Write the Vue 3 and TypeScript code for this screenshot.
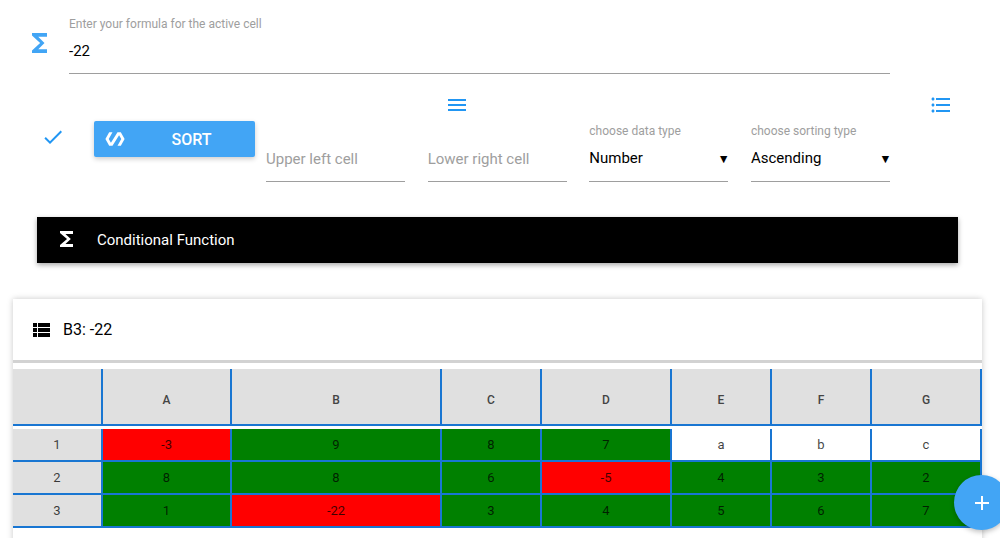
<script setup lang="ts">
interface Cell { v: string; c: string }
const cols: string[] = ['A', 'B', 'C', 'D', 'E', 'F', 'G']
const raw: string[][] = [
  ['-3', '9', '8', '7', 'a', 'b', 'c'],
  ['8', '8', '6', '-5', '4', '3', '2'],
  ['1', '-22', '3', '4', '5', '6', '7'],
]
const rows: Cell[][] = raw.map((r) =>
  r.map((v) => {
    const n = Number(v)
    return { v, c: Number.isNaN(n) ? 'plain' : n < 0 ? 'neg' : 'pos' }
  }),
)
const sigma = 'M18 4H6v2l6.5 6L6 18v2h12v-3h-7l5-5-5-5h7z'
</script>

<template>
  <div class="page">
    <div class="formula">
      <svg class="sigma" viewBox="6 4 12 16" preserveAspectRatio="none"><path :d="sigma" /></svg>
      <label class="field formula-field">
        <span class="small-label">Enter your formula for the active cell</span>
        <input class="input" value="-22" />
      </label>
    </div>

    <div class="icons">
      <svg class="ic" viewBox="0 0 24 24"><path d="M3 18h18v-2H3v2zm0-5h18v-2H3v2zm0-7v2h18V6H3z" /></svg>
      <svg class="ic" viewBox="0 0 24 24"><path d="M4 10.5c-.83 0-1.5.67-1.5 1.5s.67 1.5 1.5 1.5 1.5-.67 1.5-1.5-.67-1.5-1.5-1.5zm0-6c-.83 0-1.5.67-1.5 1.5S3.17 7.5 4 7.5 5.5 6.83 5.5 6 4.83 4.5 4 4.5zm0 12c-.83 0-1.5.68-1.5 1.5s.68 1.5 1.5 1.5 1.5-.68 1.5-1.5-.67-1.5-1.5-1.5zM7 19h14v-2H7v2zm0-6h14v-2H7v2zm0-8v2h14V5H7z" /></svg>
    </div>

    <div class="sortrow">
      <svg class="ic check" viewBox="0 0 24 24"><path d="M9 16.2L4.8 12l-1.4 1.4L9 19 21 7l-1.4-1.4z" /></svg>
      <button class="sort" type="button">
        <svg class="poly" viewBox="0 0 24 24"><path d="M19 4h-4L7.11 16.63 4.5 12 9 4H5L.5 12 5 20h4l7.89-12.63L19.5 12 15 20h4l4.5-8z" /></svg>
        <span class="sort-text">SORT</span>
      </button>
      <div class="fields">
        <div class="field"><input class="input ph" placeholder="Upper left cell" /></div>
        <div class="field"><input class="input ph" placeholder="Lower right cell" /></div>
        <div class="field">
          <span class="small-label">choose data type</span>
          <div class="select"><span>Number</span><span class="caret">▼</span></div>
        </div>
        <div class="field">
          <span class="small-label">choose sorting type</span>
          <div class="select"><span>Ascending</span><span class="caret">▼</span></div>
        </div>
      </div>
    </div>

    <div class="bar">
      <svg class="bar-sigma" viewBox="6 4 12 16" preserveAspectRatio="none"><path :d="sigma" /></svg>
      <span>Conditional Function</span>
    </div>

    <section class="card">
      <header class="card-head">
        <svg class="view" viewBox="0 0 24 24"><path d="M4 14h4v-4H4v4zm0 5h4v-4H4v4zM4 9h4V5H4v4zm5 5h12v-4H9v4zm0 5h12v-4H9v4zM9 5v4h12V5H9z" /></svg>
        <span>B3: -22</span>
      </header>
      <div class="sheet">
        <div class="hd corner"></div>
        <div v-for="c in cols" :key="c" class="hd">{{ c }}</div>
        <div class="gap"></div>
        <template v-for="(r, i) in rows" :key="i">
          <div class="rowhead">{{ i + 1 }}</div>
          <div v-for="(cell, j) in r" :key="j" class="cell" :class="cell.c">{{ cell.v }}</div>
        </template>
      </div>
    </section>

    <button class="fab" type="button" aria-label="add">
      <svg viewBox="0 0 24 24"><path d="M19 13h-6v6h-2v-6H5v-2h6V5h2v6h6v2z" /></svg>
    </button>
  </div>
</template>

<style>
html, body { margin: 0; overflow: hidden; background: #fff; }
</style>

<style scoped>
.page {
  position: relative;
  height: 538px;
  overflow: hidden;
  font-family: Roboto, "Liberation Sans", sans-serif;
  color: #000;
  box-sizing: border-box;
  padding-top: 16px;
}
.formula { display: flex; padding: 0 110px 0 32px; align-items: flex-start; }
.sigma { width: 15px; height: 20px; margin: 17px 22px 0 0; fill: #42a5f5; flex: none; }
.formula-field { flex: 1; }
.field { display: flex; flex-direction: column; justify-content: flex-end; }
.small-label { font-size: 12px; line-height: 16px; color: #9e9e9e; white-space: nowrap; }
.input {
  box-sizing: border-box;
  width: 100%;
  height: 42px;
  border: 0;
  border-bottom: 1px solid #9e9e9e;
  outline: 0;
  padding: 0 0 4px;
  background: transparent;
  font: 400 15px Roboto, sans-serif;
  color: #000;
}
.input.ph { height: 43px; padding-bottom: 2px; }
.input::placeholder { color: #9e9e9e; opacity: 1; }
.icons {
  display: flex;
  justify-content: space-between;
  padding: 19px 47px 0 445px;
}
.ic { width: 24px; height: 24px; fill: #2196f3; display: block; }
.sortrow { display: flex; align-items: flex-start; padding: 0 110px 0 41px; margin-top: -2px; height: 102px; }
.check { margin: 10px 29px 0 0; flex: none; }
.sort {
  flex: none;
  display: flex;
  align-items: center;
  width: 161px;
  height: 36px;
  margin-top: 6px;
  padding: 0 0 0 11px;
  border: 0;
  border-radius: 2px;
  background: #42a5f5;
  color: #fff;
  box-shadow: 0 2px 5px rgba(0, 0, 0, .2);
  font: 500 16px Roboto, sans-serif;
}
.poly { width: 20px; height: 20px; fill: #fff; flex: none; }
.sort-text { flex: 1; text-align: center; padding-left: 3px; }
.fields {
  flex: 1;
  display: grid;
  grid-template-columns: repeat(4, 139px);
  justify-content: space-between;
  margin-left: 11px;
  height: 67px;
  align-items: end;
}
.select {
  display: flex;
  align-items: center;
  justify-content: space-between;
  height: 43px;
  box-sizing: border-box;
  border-bottom: 1px solid #9e9e9e;
  padding-bottom: 4px;
  font-size: 15px;
  padding-right: 1px;
}
.caret { font-size: 9.5px; color: #000; font-family: "DejaVu Sans", sans-serif; }
.bar {
  display: flex;
  align-items: center;
  height: 46px;
  margin: 0 42px 0 37px;
  background: #000;
  color: #fff;
  font-size: 15px;
  font-weight: 400;
  box-shadow: 0 2px 5px rgba(0, 0, 0, .35);
}
.bar-sigma { width: 13px; height: 16px; margin: -2px 24px 0 23px; fill: #fff; flex: none; }
.card {
  margin: 36px 18px 0 13px;
  height: 300px;
  background: #fff;
  box-shadow: 0 0 6px rgba(0, 0, 0, .22);
}
.card-head {
  display: flex;
  align-items: center;
  height: 61px;
  padding-left: 16px;
  border-bottom: 3px solid #d2d2d2;
  font-size: 16px;
}
.view { width: 24px; height: 24px; fill: #000; margin-right: 10px; flex: none; }
.sheet {
  display: grid;
  grid-template-columns: 90px 129px 210px 100px 130px 100px 100px 110px;
  grid-template-rows: 57px 3px 33px 33px 33px;
  margin-top: 6px;
  font-size: 13px;
  color: rgba(0, 0, 0, .75);
}
.sheet > div {
  display: flex;
  align-items: center;
  justify-content: center;
  box-sizing: border-box;
}
.hd, .rowhead { background: #e0e0e0; }
.hd {
  border-right: 2px solid #1976d2;
  border-bottom: 2px solid #1976d2;
  padding-top: 6px;
  font-size: 12px;
  font-weight: 500;
  color: #444;
}
.gap { grid-column: 1 / -1; background: #fff; }
.rowhead, .cell {
  border-right: 2px solid #1976d2;
  border-bottom: 2px solid #1976d2;
}
.cell { background: #fff; }
.cell.neg { background: #f00; }
.cell.pos { background: #008000; }
.fab {
  position: absolute;
  left: 954px;
  top: 475px;
  width: 55px;
  height: 55px;
  padding: 0;
  border: 0;
  border-radius: 50%;
  background: #42a5f5;
  display: flex;
  align-items: center;
  justify-content: center;
  box-shadow: 0 2px 5px rgba(0, 0, 0, .25);
}
.fab svg { width: 24px; height: 24px; fill: #fff; }
</style>
